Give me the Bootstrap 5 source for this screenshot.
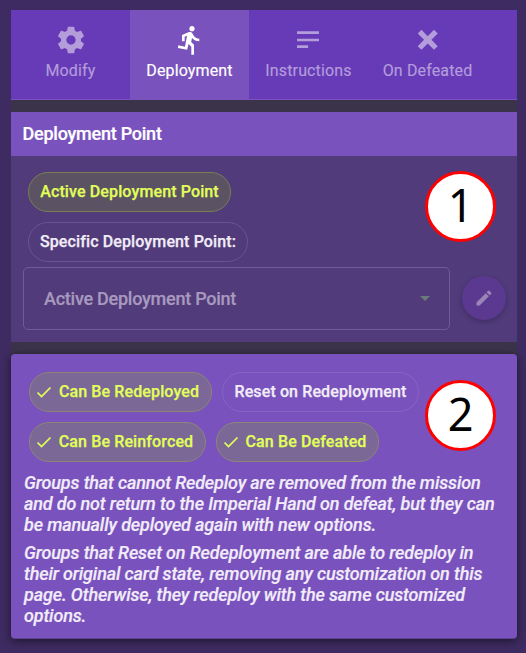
<!DOCTYPE html>
<html lang="en">
<head>
<meta charset="utf-8">
<meta name="viewport" content="width=device-width, initial-scale=1">
<title>Deployment</title>
<link href="https://cdn.jsdelivr.net/npm/bootstrap@5.3.0/dist/css/bootstrap.min.css" rel="stylesheet">
<style>
body{background:#3e2b61;font-family:Roboto,sans-serif;color:#fff;height:653px;overflow:hidden}
.panel{width:506px;margin:10px 0 0 11px;background:#3b3349}
.tabs{height:90px;background:#673bb7;border-bottom:1px solid #7a52bd}
.tab-item{width:119px;height:89px;padding-top:14px;color:#b39ddb;font-size:16px;line-height:24px;letter-spacing:.14px;text-decoration:none;-webkit-text-stroke:.15px currentColor}
.tab-item svg{width:32px;height:32px;fill:currentColor;margin-bottom:3px}
.tab-item.active{background:#7a52bd;color:#fff}
.section-head{height:44px;background:#7a52bd;font-size:18px;font-weight:500;padding:0 11.5px 2px;letter-spacing:-.24px;-webkit-text-stroke:.2px currentColor}
.section-body{height:186px;background:#513b7b;padding:16px 12px 0}
.section-body .chip{margin-left:5px}
.chip-stack{gap:10px}
.chip{height:40px;border:1px solid #6a5490;border-radius:20px;font-size:16px;font-weight:500;color:#f1edf6;white-space:nowrap;letter-spacing:.12px;-webkit-text-stroke:.25px currentColor}
.chip svg{width:16px;height:16px;margin-right:7px;margin-left:-6px;fill:none;stroke:currentColor;stroke-width:1.7}
.chip.on{background:#5b5264;border-color:#788052;color:#e2ff59}
.w-active{width:203px}.w-specific{width:220px}
.w-redeploy{width:183px}.w-reset{width:197px}.w-reinforce{width:177px}.w-defeat{width:163px}
.select-row{margin-top:5px;gap:12px}
.select-box{width:427px;height:63px;flex:none;border:1px solid #705b94;border-radius:5px;padding:0 19px 0 20px;font-size:18px;font-weight:500;color:#a899bf;letter-spacing:-.25px;-webkit-text-stroke:.2px currentColor}
.caret{border:5px solid transparent;border-top-color:#6c7a78;border-bottom:0}
.edit-btn{width:44px;height:44px;flex:none;margin-bottom:1px;background:#5b3990;box-shadow:0 2px 5px rgba(0,0,0,.22)}
.edit-btn svg{width:20px;height:20px;fill:#9a86b6}
.options{height:285px;background:#7a52bd;border-radius:4px;border-bottom:1px solid #604090;padding:18px 12px 0 13px;box-shadow:0 2px 8px rgba(0,0,0,.55)}
.options .chip{border-color:#8963c5}
.options .chip.on{background:#7b6896;border-color:#8d8677}
.chips-row{gap:10px;margin:0 0 10px 5px}
.note{font-size:18px;line-height:21px;font-weight:500;font-style:italic;color:#f1ecf8;white-space:nowrap;letter-spacing:-.15px;-webkit-text-stroke:.2px currentColor}
.note+.note{margin-top:7px}
.marker{width:71px;height:71px;left:425px;padding-bottom:5px;background:#fff;border:3px solid #f00;color:#000;font-family:"Noto Sans",sans-serif;font-size:45px;line-height:1}
.marker-one{top:171px}.marker-two{top:380px}
</style>
<script src="https://cdn.jsdelivr.net/npm/bootstrap@5.3.0/dist/js/bootstrap.bundle.min.js"></script>
</head>
<body>
<main class="panel">
  <nav class="tabs d-flex">
    <a class="tab-item d-flex flex-column align-items-center" href="#"><svg viewBox="0 0 24 24"><path d="M12 15.5A3.5 3.5 0 0 1 8.500 12 3.500 3.500 0 0 1 12 8.500a3.500 3.500 0 0 1 3.500 3.500 3.500 3.500 0 0 1-3.500 3.500m7.430-2.530c.04-.32.07-.64.07-.97s-.03-.66-.07-1l2.110-1.630c.19-.15.24-.42.12-.64l-2-3.460c-.12-.22-.39-.31-.61-.22l-2.490 1c-.52-.39-1.060-.73-1.690-.98l-.37-2.650A.506.506 0 0 0 14 2h-4c-.25 0-.46.18-.5.42l-.37 2.650c-.63.25-1.170.59-1.690.98l-2.490-1c-.22-.09-.49 0-.61.22l-2 3.460c-.13.22-.07.49.12.64L4.570 11c-.04.34-.07.67-.07 1s.03.65.07.97l-2.110 1.660c-.19.15-.25.42-.12.64l2 3.460c.12.22.39.3.61.22l2.490-1.010c.52.4 1.060.74 1.690.99l.37 2.650c.04.24.25.42.5.42h4c.25 0 .46-.18.5-.42l.37-2.650c.63-.26 1.170-.59 1.690-.99l2.490 1.010c.22.08.49 0 .61-.22l2-3.460c.12-.22.07-.49-.12-.64z"/></svg>Modify</a>
    <a class="tab-item active d-flex flex-column align-items-center" href="#"><svg viewBox="0 0 24 24"><path d="M13.490 5.480c1.100 0 2-.9 2-2s-.9-2-2-2-2 .9-2 2 .9 2 2 2zm-3.600 13.900l1-4.400 2.100 2v6h2v-7.500l-2.100-2 .6-3c1.300 1.500 3.300 2.500 5.500 2.500v-2c-1.900 0-3.500-1-4.300-2.400l-1-1.600c-.4-.6-1-1-1.700-1-.3 0-.5.1-.8.1l-5.200 2.200v4.700h2v-3.400l1.800-.7-1.600 8.100-4.900-1-.4 2 7 1.400z"/></svg>Deployment</a>
    <a class="tab-item d-flex flex-column align-items-center" href="#"><svg viewBox="0 0 24 24"><path d="M3 5.500h16.500v2H3zM3 11h16.500v2H3zM3 16h8.300v2H3z"/></svg>Instructions</a>
    <a class="tab-item d-flex flex-column align-items-center" href="#"><svg viewBox="0 0 24 24"><path d="M19.300 7.200 16.500 4.400 11.800 9.100 7.100 4.400 4.300 7.200 9 11.900 4.300 16.600 7.100 19.400 11.800 14.700 16.500 19.400 19.300 16.600 14.600 11.900z"/></svg>On Defeated</a>
  </nav>
  <section class="mt-2 pt-1">
    <div class="section-head d-flex align-items-center">Deployment Point</div>
    <div class="section-body">
      <div class="chip-stack d-flex flex-column">
        <div class="chip on w-active d-flex align-items-center justify-content-center">Active Deployment Point</div>
        <div class="chip w-specific d-flex align-items-center justify-content-center">Specific Deployment Point:</div>
      </div>
      <div class="d-flex align-items-center select-row">
        <div class="select-box d-flex align-items-center justify-content-between"><span>Active Deployment Point</span><span class="caret"></span></div>
        <button class="edit-btn btn rounded-circle border-0 p-0 d-flex align-items-center justify-content-center" aria-label="Edit"><svg viewBox="0 0 24 24"><path d="M20.710 7.040c.39-.39.39-1.040 0-1.410l-2.340-2.340c-.37-.39-1.020-.39-1.410 0l-1.840 1.830 3.750 3.750M3 17.250V21h3.750L17.810 9.930l-3.750-3.750z"/></svg></button>
      </div>
    </div>
  </section>
  <section class="mt-2 pt-1">
    <div class="options">
      <div class="d-flex chips-row">
        <div class="chip on w-redeploy d-flex align-items-center justify-content-center"><svg viewBox="0 0 16 16"><path d="m1.500 8.500 4 4L14.500 3.500"/></svg>Can Be Redeployed</div>
        <div class="chip w-reset d-flex align-items-center justify-content-center">Reset on Redeployment</div>
      </div>
      <div class="d-flex chips-row">
        <div class="chip on w-reinforce d-flex align-items-center justify-content-center"><svg viewBox="0 0 16 16"><path d="m1.500 8.500 4 4L14.500 3.500"/></svg>Can Be Reinforced</div>
        <div class="chip on w-defeat d-flex align-items-center justify-content-center"><svg viewBox="0 0 16 16"><path d="m1.500 8.500 4 4L14.500 3.500"/></svg>Can Be Defeated</div>
      </div>
      <p class="note mb-0">Groups that cannot Redeploy are removed from the mission<br>and do not return to the Imperial Hand on defeat, but they can<br>be manually deployed again with new options.</p>
      <p class="note mb-0">Groups that Reset on Redeployment are able to redeploy in<br>their original card state, removing any customization on this<br>page. Otherwise, they redeploy with the same customized<br>options.</p>
    </div>
  </section>
</main>
<div class="marker marker-one position-absolute rounded-circle d-flex align-items-center justify-content-center">1</div>
<div class="marker marker-two position-absolute rounded-circle d-flex align-items-center justify-content-center">2</div>
</body>
</html>
